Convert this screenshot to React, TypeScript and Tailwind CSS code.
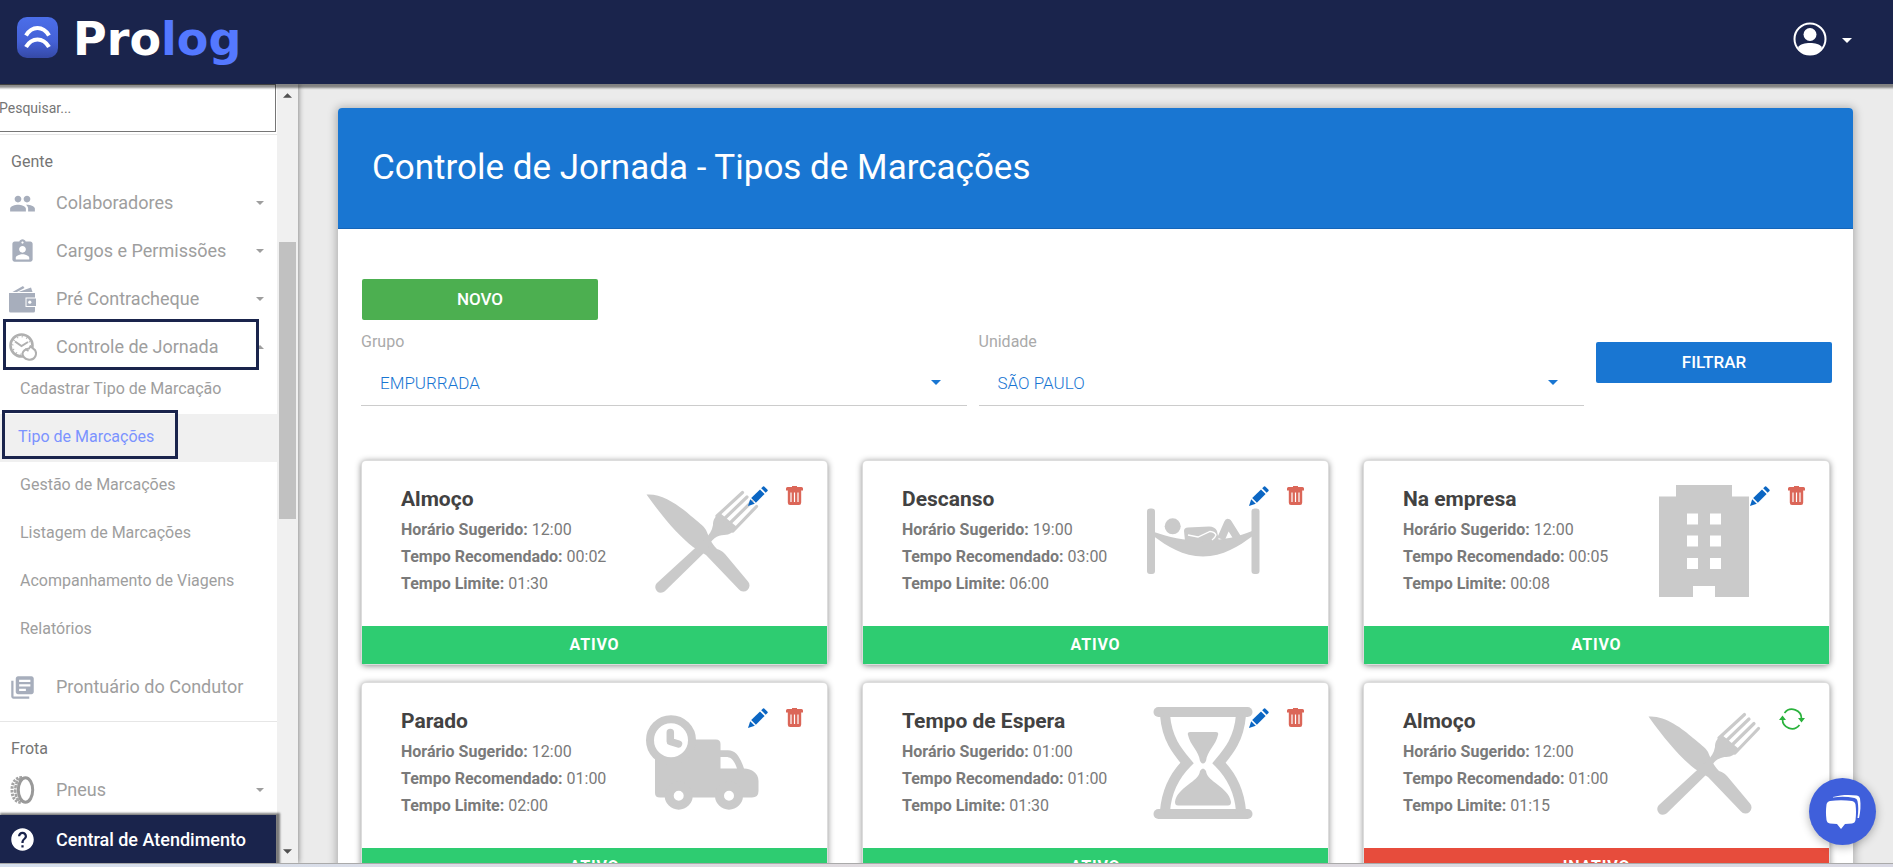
import type { ReactNode } from "react";
import { MdAssignmentInd, MdHelp, MdLibraryBooks, MdPeople } from "react-icons/md";

function Caret({ className = "", up = false }: { className?: string; up?: boolean }) {
  return (
    <svg viewBox="0 0 10 5" className={className} fill="currentColor" aria-hidden="true">
      <path d={up ? "M0 5 L5 0 L10 5 Z" : "M0 0 L5 5 L10 0 Z"} />
    </svg>
  );
}

function LogoMark() {
  return (
    <svg viewBox="0 0 41 41" className="size-[41px]" aria-hidden="true">
      <defs>
        <linearGradient id="mark" x1="0" y1="0" x2="0" y2="1">
          <stop offset="0" stopColor="#4b6ee9" />
          <stop offset="0.6" stopColor="#4461d6" />
          <stop offset="1" stopColor="#3549a6" />
        </linearGradient>
      </defs>
      <rect width="41" height="41" rx="10" fill="url(#mark)" />
      <g fill="none" stroke="#fff" strokeWidth="4.200">
        <path d="M9 18.500 C15 8.500 26 8.500 32 18.500" />
        <path d="M9 30 C15 20 26 20 32 30" />
      </g>
    </svg>
  );
}

function UserIcon() {
  return (
    <svg viewBox="0 0 34 34" className="size-[34px]" aria-hidden="true">
      <circle cx="17" cy="17" r="15.500" fill="none" stroke="#fff" strokeWidth="2" />
      <circle cx="17" cy="12.500" r="6.500" fill="#fff" />
      <path d="M5 25 C9 19.500 25 19.500 29 25 C26 30.500 22 33 17 33 C12 33 8 30.500 5 25 Z" fill="#fff" />
    </svg>
  );
}

function WalletIcon() {
  return (
    <svg viewBox="0 0 27 27" className="size-[27px]" aria-hidden="true">
      <g fill="#a7aebc">
        <path d="M3.500 6 L14 0 L15.500 2 L8 6 Z" />
        <path d="M9.500 6 L22 1.500 L23.500 6 Z" />
        <path d="M0 7 H26 V11.500 H16.500 V21 H26 V25 Q26 26.500 24.500 26.500 H1.500 Q0 26.500 0 25 Z" />
        <path d="M17.500 12.500 H27 V20 H17.500 Z" />
      </g>
      <circle cx="20.800" cy="16.200" r="1.600" fill="#fff" />
    </svg>
  );
}

function ClockIcon() {
  return (
    <svg viewBox="0 0 28 28" className="size-[28px]" fill="none" stroke="#b0b0b0" aria-hidden="true">
      <circle cx="12.500" cy="12.500" r="11" strokeWidth="2.600" />
      <circle cx="12.500" cy="12.500" r="8.800" strokeWidth="1.400" strokeDasharray="1 3.600" />
      <path d="M6 8.500 L12.500 13 L19 9" strokeWidth="2" />
      <path d="M20 15.500 L21.500 13.500 L24 15.500 C27 17 27.500 20 26.500 23 C25 26.500 22 27 19 26.500 C15.500 26 13.500 23 13.500 20.500 C14 18 17 16 20 15.500 Z" fill="#fff" strokeWidth="2" />
      <path d="M16 16 L19.500 18" strokeWidth="1.600" />
    </svg>
  );
}

function TireIcon() {
  return (
    <svg viewBox="0 0 26 28" className="h-[28px] w-[26px]" fill="none" aria-hidden="true">
      <path d="M13 1.500 C6 1.500 3 7 3 14 C3 21 6 26.500 13 26.500" stroke="#a3a3a3" strokeWidth="3" strokeDasharray="2.400 1.200" />
      <path d="M12 2.500 C8 4 6.300 9 6.300 14 C6.300 19 8 24 12 25.500" stroke="#a3a3a3" strokeWidth="2.600" strokeDasharray="3.400 0.900" />
      <ellipse cx="16.500" cy="14" rx="7.200" ry="12.200" stroke="#999999" strokeWidth="3" />
    </svg>
  );
}

function PencilIcon() {
  return (
    <svg viewBox="0 0 20 20" className="size-5" fill="#0b66c3" aria-hidden="true">
      <path d="M0 20 L2.200 13.200 L6.800 17.800 Z" />
      <path d="M3.200 12 L12 3.400 L16.600 8 L7.900 16.700 Z" />
      <path d="M13.200 2.300 L15 0.500 Q15.600 0 16.200 0.500 L19.500 3.800 Q20 4.400 19.500 5 L17.700 6.800 Z" />
    </svg>
  );
}

function TrashIcon() {
  return (
    <svg viewBox="0 0 17 19" className="h-[19px] w-[17px]" fill="#db6658" aria-hidden="true">
      <path d="M6 0 H11 V1 H15.500 Q17 1 17 2.500 V4.500 H0 V2.500 Q0 1 1.500 1 H6 Z" />
      <path fillRule="evenodd" d="M1.800 4 H15.200 V16.500 Q15.200 19 13 19 H4 Q1.800 19 1.800 16.500 Z M4.400 6.500 V16 H5.600 V6.500 Z M7.900 6.500 V16 H9.100 V6.500 Z M11.400 6.500 V16 H12.600 V6.500 Z" />
    </svg>
  );
}

function RefreshIcon() {
  return (
    <svg viewBox="0 0 26 22" className="h-[22px] w-[26px]" aria-hidden="true">
      <g fill="none" stroke="#2ab23c" strokeWidth="1.700">
        <path d="M5.500 5 A9.500 9.500 0 0 1 22.500 11" />
        <path d="M20.500 17 A9.500 9.500 0 0 1 3.500 11" />
      </g>
      <path d="M19 10 H26 L22.500 14.500 Z M0 12 L3.500 7.500 L7 12 Z" fill="#2ab23c" />
    </svg>
  );
}

const drawings: Record<string, ReactNode> = {
  meal: (
    <>
      <path d="M0.500 9.500 C16 8 34 21 45 31 C52 37 57 40 60 45 C63 52 65 58 71 64 C74 65 76 66 79 69 L102 96.500 A6 6 0 0 1 93 104.500 L60 70 L47 62 C33 51 18 34 0.500 9.500 Z" />
      <path d="M18.800 106.300 L62 64 C64 54 72 50 78 50 C84 50 87 47 91 42 L74 28 C68 32 67 36 67 40 C66 46 63 50 59 54 L10.700 98.300 A5.700 5.700 0 0 0 18.800 106.300 Z" />
      <path d="M71 31 L96.500 7.500 M76 36 L101 12 M81 41 L106 16.500 M87 46 L110.500 21.500" fill="none" stroke="currentColor" strokeWidth="3.200" strokeLinecap="round" />
    </>
  ),
  hammock: (
    <>
      <rect x="0" y="23.500" width="8" height="65.500" rx="3" />
      <rect x="104.500" y="23.500" width="8" height="65.500" rx="3" />
      <path d="M7 47 C22 52 36 55.500 56 55.500 C76 55.500 94 51 105 46 V51.500 C92 61 76 71.500 56 71.500 C36 71.500 20 61 7 51.500 Z" />
      <circle cx="25.700" cy="41.300" r="8" />
      <path d="M37 46 Q37 42.500 41 42.500 L62 41.500 Q68 41.500 70 46 L72 56 H38 Z" />
      <path d="M74 54 L81 38 L91 54" fill="none" stroke="currentColor" strokeWidth="8" strokeLinejoin="round" />
      <path d="M42 54 L54 54 L66 48" fill="none" stroke="currentColor" strokeWidth="5" />
      <path d="M41 50 L51 52 L63 46.500 Q68 47 69 50 Q68 53 65 55" fill="none" stroke="#fff" strokeWidth="1.300" />
    </>
  ),
  building: (
    <path
      fillRule="evenodd"
      d="M28 0 H84 V11.500 H101 V112 H67 V101 H45 V112 H11 V11.500 H28 Z M39 28.500 V39.500 H50 V28.500 Z M62 28.500 V39.500 H73 V28.500 Z M39 50.500 V61.500 H50 V50.500 Z M62 50.500 V61.500 H73 V50.500 Z M39 73 V84 H50 V73 Z M62 73 V84 H73 V73 Z"
    />
  ),
  truck: (
    <>
      <path
        fillRule="evenodd"
        d="M9 45 L40 32.500 H70 Q74.500 32.500 74.500 37 V43.300 H82 C90 43.300 94 50 98 61.500 C106 62 112.500 66 112.500 74 V84 Q112.500 90.500 106 90.500 H14 Q9 90.500 9 86 Z M74.500 50 V61.500 H91 C88 53 85 50 80 50 Z"
      />
      <circle cx="25" cy="33.300" r="21" fill="#fff" stroke="currentColor" strokeWidth="8" />
      <path d="M24.300 25.500 V34.500 L32.500 37" fill="none" stroke="currentColor" strokeWidth="7.500" strokeLinecap="round" strokeLinejoin="round" />
      <circle cx="32.700" cy="88.700" r="9.500" fill="#fff" stroke="currentColor" strokeWidth="9" />
      <circle cx="83" cy="88.700" r="9.500" fill="#fff" stroke="currentColor" strokeWidth="9" />
    </>
  ),
  hourglass: (
    <>
      <rect x="6.500" y="0" width="99" height="10" rx="5" />
      <rect x="6.500" y="102" width="99" height="10" rx="5" />
      <path d="M18 8 C20 32 30 44 40 56 C30 66 20 80 18 104 M94 8 C92 32 82 44 72 56 C82 66 92 80 94 104" fill="none" stroke="currentColor" strokeWidth="10" />
      <path d="M43 25 H69 Q72 25 71 28 C69 38 60 44 59 54 Q56 59 53 54 C52 44 43 38 41 28 Q40 25 43 25 Z" />
      <path d="M53 64 Q56 59 59 64 C60 75 82 80 84 95 Q84 98.500 81 98.500 H31 Q28 98.500 28 95 C30 80 52 75 53 64 Z" />
    </>
  ),
};

interface Marking {
  name: string;
  drawing: string;
  suggested: string;
  recommended: string;
  limit: string;
  active: boolean;
}

const markings: Marking[] = [
  { name: "Almoço", drawing: "meal", suggested: "12:00", recommended: "00:02", limit: "01:30", active: true },
  { name: "Descanso", drawing: "hammock", suggested: "19:00", recommended: "03:00", limit: "06:00", active: true },
  { name: "Na empresa", drawing: "building", suggested: "12:00", recommended: "00:05", limit: "00:08", active: true },
  { name: "Parado", drawing: "truck", suggested: "12:00", recommended: "01:00", limit: "02:00", active: true },
  { name: "Tempo de Espera", drawing: "hourglass", suggested: "01:00", recommended: "01:00", limit: "01:30", active: true },
  { name: "Almoço", drawing: "meal", suggested: "12:00", recommended: "01:00", limit: "01:15", active: false },
];

function MarkingCard({ item }: { item: Marking }) {
  return (
    <article className="relative rounded-[4px] bg-white shadow-[0_0_0_1px_#dcdcdc,0_1px_6px_1px_rgba(0,0,0,0.45)]">
      <div className="flex h-[165px] justify-between pt-6 pr-[69px] pl-[39px]">
        <div className="text-base leading-[27px] whitespace-nowrap text-[#7a7a7a]">
          <h2 className="mb-0.5 text-[21px] leading-[29px] font-bold text-[#424242]">{item.name}</h2>
          <p><strong>Horário Sugerido:</strong> {item.suggested}</p>
          <p><strong>Tempo Recomendado:</strong> {item.recommended}</p>
          <p><strong>Tempo Limite:</strong> {item.limit}</p>
        </div>
        <svg viewBox="0 0 112 112" className="size-28 shrink-0 overflow-visible text-[#cacaca]" fill="currentColor" aria-hidden="true">
          {drawings[item.drawing]}
        </svg>
      </div>
      <div className="absolute top-[25px] right-6 flex items-start gap-[18px]">
        {item.active ? (
          <>
            <button type="button" aria-label="Editar"><PencilIcon /></button>
            <button type="button" aria-label="Excluir"><TrashIcon /></button>
          </>
        ) : (
          <button type="button" aria-label="Reativar"><RefreshIcon /></button>
        )}
      </div>
      <div className={`flex h-[38px] items-center justify-center font-bold tracking-wider text-white ${item.active ? "bg-[#2ecc71]" : "bg-[#e74c3c]"}`}>
        {item.active ? "ATIVO" : "INATIVO"}
      </div>
    </article>
  );
}

function MenuItem({ icon, label, caret, marked }: { icon: ReactNode; label: string; caret?: "up" | "down"; marked?: boolean }) {
  return (
    <a href="#" className="relative flex h-12 items-center pr-[13px] pl-[9px] text-lg text-[#9e9e9e]">
      <span className="flex w-[47px] items-center">{icon}</span>
      <span className="flex-1 whitespace-nowrap">{label}</span>
      {caret && <Caret up={caret === "up"} className="h-1 w-2" />}
      {marked && <span className="absolute top-[-4px] left-[3px] h-[51px] w-64 border-3 border-[#1a244c]" />}
    </a>
  );
}

const subItems = [
  "Cadastrar Tipo de Marcação",
  "Tipo de Marcações",
  "Gestão de Marcações",
  "Listagem de Marcações",
  "Acompanhamento de Viagens",
  "Relatórios",
];

function Sidebar() {
  return (
    <aside className="z-10 flex w-[298px] shrink-0 bg-[#f0f0f0] shadow-[1px_0_5px_rgba(0,0,0,0.4)]">
      <div className="flex w-[277px] flex-col bg-white">
        <nav className="min-h-0 flex-1 overflow-hidden">
          <input
            type="text"
            aria-label="Pesquisar"
            placeholder="Pesquisar..."
            className="-ml-1 block h-12 w-[280px] border border-[#767676] pl-[2px] text-sm outline-none placeholder:text-[#757575]"
          />
          <div className="mt-[2px] h-[45px] border-t border-[#e6e6e6] px-[11px] pt-[15px] text-base text-[#757575]">Gente</div>
          <MenuItem icon={<MdPeople className="size-[27px] text-[#a7aebc]" />} label="Colaboradores" caret="down" />
          <MenuItem icon={<MdAssignmentInd className="size-[27px] text-[#a7aebc]" />} label="Cargos e Permissões" caret="down" />
          <MenuItem icon={<WalletIcon />} label="Pré Contracheque" caret="down" />
          <MenuItem icon={<ClockIcon />} label="Controle de Jornada" caret="up" marked />
          <ul className="-mt-[5px] mb-[9px]">
            {subItems.map((label) => {
              const current = label === "Tipo de Marcações";
              return (
                <li key={label}>
                  <a
                    href="#"
                    className={`relative flex h-12 items-center pb-[2px] text-base whitespace-nowrap ${current ? "bg-[#f0f0f0] pl-[18px] text-[#7b93ff]" : "pl-5 text-[#9e9e9e]"}`}
                  >
                    {label}
                    {current && <span className="absolute top-[-4px] left-[2px] h-[49px] w-44 border-3 border-[#1a244c]" />}
                  </a>
                </li>
              );
            })}
          </ul>
          <MenuItem icon={<MdLibraryBooks className="size-[27px] text-[#a7aebc]" />} label="Prontuário do Condutor" />
          <div className="mt-[10px] h-[45px] border-t border-[#e6e6e6] px-[11px] pt-[15px] text-base text-[#757575]">Frota</div>
          <MenuItem icon={<TireIcon />} label="Pneus" caret="down" />
        </nav>
        <a href="#" className="mr-px flex h-12 shrink-0 items-center bg-[#1a244c] pt-px pl-[9px] text-lg font-medium whitespace-nowrap text-white shadow-[2px_0_2px_2px_rgba(0,0,0,0.5)]">
          <span className="flex w-[47px]"><MdHelp className="size-[27px]" /></span>
          Central de Atendimento
        </a>
      </div>
      <div className="flex flex-1 flex-col items-center justify-between pt-[9px] pb-[9px] text-[#505050]">
        <Caret up className="h-[5px] w-[9px]" />
        <div className="mt-[144px] h-[277px] w-[17px] bg-[#c1c1c1]" />
        <div className="flex-1" />
        <Caret className="h-[5px] w-[9px]" />
      </div>
    </aside>
  );
}

function Field({ id, label, value }: { id: string; label: string; value: string }) {
  return (
    <div className="flex-1">
      <label htmlFor={id} className="block text-base leading-6 text-[#aaaaaa]">{label}</label>
      <div className="relative">
        <select
          id={id}
          className="block h-[52px] w-full appearance-none border-b border-[#cccccc] bg-transparent pt-[9px] pl-[19px] text-[17px] font-light text-[#1976d2] outline-none"
        >
          <option>{value}</option>
        </select>
        <Caret className="pointer-events-none absolute top-[26px] right-[26px] h-[5px] w-[10px] text-[#1976d2]" />
      </div>
    </div>
  );
}

export default function App() {
  return (
    <div className="flex h-screen flex-col overflow-hidden bg-[#ebebeb] font-['Roboto',sans-serif]">
      <header className="z-20 flex h-[84px] shrink-0 items-center justify-between bg-[#1a244c] pr-[41px] pl-[17px] shadow-[0_2px_2px_2px_rgba(0,0,0,0.45)]">
        <a href="#" className="mb-[10px] flex items-center gap-[15px]">
          <LogoMark />
          <span className="pt-1 font-['DejaVu_Sans',sans-serif] text-[46px] leading-[52px] font-bold text-white">
            Pro<span className="text-[#5478ff]">log</span>
          </span>
        </a>
        <button type="button" aria-label="Conta" className="mb-1.5 flex items-center gap-[15px] text-white">
          <UserIcon />
          <Caret className="mt-[3px] h-[5px] w-[10px]" />
        </button>
      </header>

      <div className="flex min-h-0 flex-1">
        <Sidebar />
        <main className="min-w-0 flex-1 overflow-hidden px-10 pt-6">
          <section className="rounded-[4px] bg-white shadow-[0_1px_8px_2px_rgba(0,0,0,0.25)]">
            <div className="flex h-[121px] items-center rounded-t-[4px] border-b border-[#1565b8] bg-[#1976d2] px-[34px]">
              <h1 className="text-[35px] leading-10 text-white">Controle de Jornada - Tipos de Marcações</h1>
            </div>
            <div className="px-6 pt-[50px] pb-8">
              <button type="button" className="block h-[41px] w-[236px] rounded-[2px] bg-[#4caf50] text-[17px] font-medium text-white">
                NOVO
              </button>
              <form className="-mr-[3px] -ml-px flex gap-3 pt-[10px]">
                <Field id="grupo" label="Grupo" value="EMPURRADA" />
                <Field id="unidade" label="Unidade" value="SÃO PAULO" />
                <button type="button" className="mt-3 h-[41px] w-[236px] rounded-[2px] bg-[#1976d2] text-[17px] font-medium text-white">
                  FILTRAR
                </button>
              </form>
              <div className="mt-[55px] grid grid-cols-3 gap-x-9 gap-y-[19px]">
                {markings.map((item, index) => (
                  <MarkingCard key={index} item={item} />
                ))}
              </div>
            </div>
          </section>
        </main>
      </div>

      <div className="z-20 h-1 shrink-0 border-t border-[#aaaaaa] bg-linear-to-r from-[#d5dfee] via-[#e0dadd] to-[#d9d9e4]" />

      <button
        type="button"
        aria-label="Abrir chat"
        className="fixed right-[17px] bottom-[22px] z-30 flex size-[67px] items-center justify-center rounded-full bg-[#3f5fdb] shadow-[0_2px_10px_rgba(0,0,0,0.3)]"
      >
        <svg viewBox="0 0 36 36" className="size-9" aria-hidden="true">
          <path d="M8 3 C16 0.500 25 0.500 32 1.500 Q34.500 2 35 4.500 C36 11 35.500 18 34 24 L32.500 24 C33.500 17 33.500 12 32.500 7 Q32 4.500 29.500 4 C22 2.500 15 2.500 8 3.500 Z" fill="#fff" />
          <path d="M5 7 C12 6 20 6 27 7 Q30 7.500 30.500 10.500 C31.200 16 31.200 20 30.500 26 Q30 29 27 29.500 L20 30 L16 35 L12 30 L5 29.500 Q2 29 1.500 26 C0.800 20 0.800 16 1.500 10.500 Q2 7.500 5 7 Z" fill="#fff" />
        </svg>
      </button>
    </div>
  );
}
